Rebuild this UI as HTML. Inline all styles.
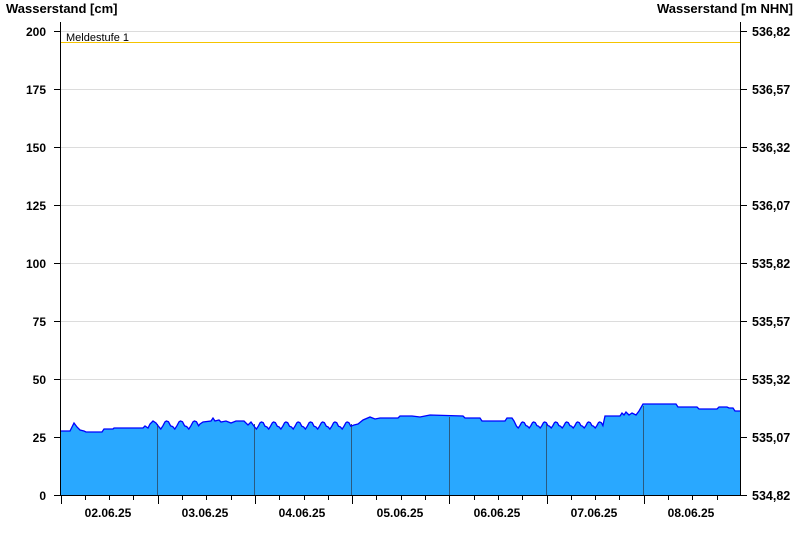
<!DOCTYPE html>
<html><head><meta charset="utf-8"><style>
html,body{margin:0;padding:0;background:#fff;}
svg{display:block;font-family:"Liberation Sans",Arial,sans-serif;}
.b{font-weight:bold;font-size:12px;fill:#000;}
</style></head><body>
<svg id="s" width="800" height="550" viewBox="0 0 800 550" xmlns="http://www.w3.org/2000/svg">
<text x="6" y="13" class="b" style="font-size:13px">Wasserstand [cm]</text>
<text x="793" y="13" class="b" text-anchor="end" style="font-size:13px">Wasserstand [m NHN]</text>
<g stroke="#dcdcdc" stroke-width="1">
<line x1="61" x2="740" y1="31.5" y2="31.5"/><line x1="61" x2="740" y1="89.5" y2="89.5"/>
<line x1="61" x2="740" y1="147.5" y2="147.5"/><line x1="61" x2="740" y1="205.5" y2="205.5"/>
<line x1="61" x2="740" y1="263.5" y2="263.5"/><line x1="61" x2="740" y1="321.5" y2="321.5"/>
<line x1="61" x2="740" y1="379.5" y2="379.5"/><line x1="61" x2="740" y1="437.5" y2="437.5"/>
</g>
<line x1="61" x2="740" y1="42.5" y2="42.5" stroke="#f5c400" stroke-width="1"/>
<text x="66" y="41" font-size="11" fill="#000">Meldestufe 1</text>
<path id="area" fill="#29a8ff" stroke="none" d=""/>
<g stroke="#2a5a80" stroke-width="1">
<line x1="157.5" x2="157.5" y1="424" y2="495"/><line x1="254.5" x2="254.5" y1="424" y2="495"/>
<line x1="351.5" x2="351.5" y1="424" y2="495"/><line x1="449.5" x2="449.5" y1="417" y2="495"/>
<line x1="546.5" x2="546.5" y1="424" y2="495"/><line x1="643.5" x2="643.5" y1="406" y2="495"/>
</g>
<path id="ln" fill="none" stroke="#0000ff" stroke-width="1.3" d=""/>
<g stroke="#000" stroke-width="1">
<line x1="60.5" x2="60.5" y1="22" y2="496"/><line x1="740.5" x2="740.5" y1="22" y2="496"/>
<line x1="60" x2="741" y1="495.5" y2="495.5"/>
</g>
<g id="ticks" stroke="#000" stroke-width="1"></g>
<g class="b" text-anchor="end">
<text x="46" y="36">200</text><text x="46" y="94">175</text><text x="46" y="152">150</text>
<text x="46" y="210">125</text><text x="46" y="268">100</text><text x="46" y="326">75</text>
<text x="46" y="384">50</text><text x="46" y="442">25</text><text x="46" y="500">0</text>
</g>
<g class="b" style="font-size:12.5px">
<text x="752" y="36">536,82</text><text x="752" y="94">536,57</text><text x="752" y="152">536,32</text>
<text x="752" y="210">536,07</text><text x="752" y="268">535,82</text><text x="752" y="326">535,57</text>
<text x="752" y="384">535,32</text><text x="752" y="442">535,07</text><text x="752" y="500">534,82</text>
</g>
<g class="b" text-anchor="middle">
<text x="108" y="517">02.06.25</text><text x="205" y="517">03.06.25</text><text x="302" y="517">04.06.25</text>
<text x="400" y="517">05.06.25</text><text x="497" y="517">06.06.25</text><text x="594" y="517">07.06.25</text>
<text x="691" y="517">08.06.25</text>
</g>
</svg>
<script>
var pts=[];
function add(x,y){pts.push([x,y]);}
add(61,431);add(70,431);add(72,427);add(74,423);add(77,427);add(80,430);add(84,431);add(86,432);add(102,432);add(104,429);add(113,429);add(114,428);add(143,428);add(145,426);add(148,428);
function waves(x0,x1,base,amp,p){var n=Math.floor((x1-x0)/p);p=(x1-x0)/n;for(var i=0;i<n;i++){var x=x0+i*p;add(x+p*0.05,base+amp*0.7);add(x+p*0.2,base+amp);add(x+p*0.35,base+amp*0.6);add(x+p*0.5,base+amp*0.1);add(x+p*0.6,base);add(x+p*0.75,base+amp*0.1);add(x+p*0.9,base+amp*0.6);}}
add(150,424);add(153,421);add(156,423);
waves(158,200,421,8,11);
add(200,424);add(203,422);add(211,421);add(213,418);add(215,421);add(219,420);add(221,422);add(226,421);add(231,423);add(236,421);add(244,421);add(248,425);add(251,422);
waves(254,352,422,7,11.5);
add(354,425);add(358,424);add(363,420);add(370,417);add(375,419);add(380,418);add(398,418);add(400,416);add(412,416);add(420,417);add(425,416);add(430,415);add(463,416);add(465,418);add(480,418);add(482,421);add(505,421);add(507,418);add(512,418);add(514,421);
waves(516,604,422,6,11);
add(605,416);add(620,416);add(622,413);add(624,415);add(626,412);add(629,415);add(632,413);add(636,415);add(639,411);add(643,404);add(676,404);add(678,407);add(697,407);add(699,409);add(717,409);add(719,407);add(727,407);add(729,408);add(733,408);add(735,411);add(740,411);
var d="M"+pts.map(function(p){return p[0].toFixed(1)+","+p[1]}).join(" L");
document.getElementById("ln").setAttribute("d",d);
document.getElementById("area").setAttribute("d",d+" L740,495 L61,495 Z");
var g=document.getElementById("ticks"),h="";
for(var i=0;i<9;i++){var y=31.5+58*i;h+='<line x1="54" x2="60" y1="'+y+'" y2="'+y+'"/><line x1="741" x2="747" y1="'+y+'" y2="'+y+'"/>';}
for(var k=0;k<=28;k++){var x=Math.round(60.5+k*24.3)+0.5;if(x>741)break;h+='<line x1="'+x+'" x2="'+x+'" y1="495" y2="'+(k%4==0?504:500)+'"/>';}
g.innerHTML=h;
</script>
</body></html>
